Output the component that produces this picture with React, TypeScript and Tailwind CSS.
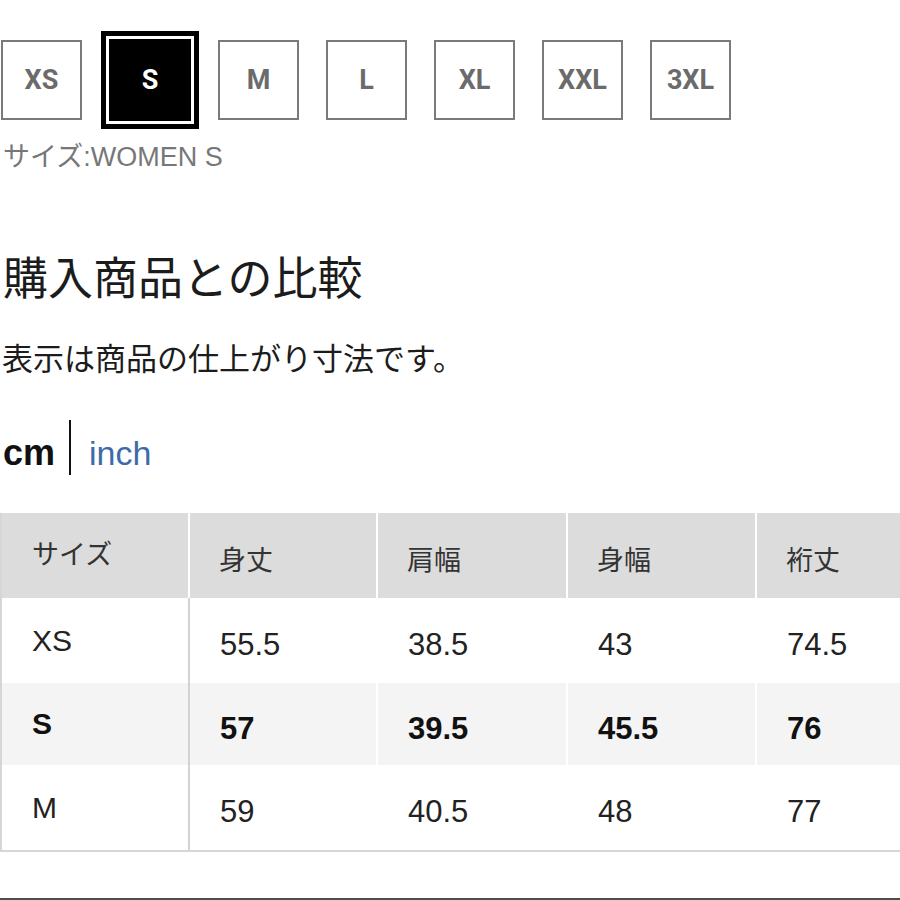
const sizes = ["XS", "S", "M", "L", "XL", "XXL", "3XL"];
const selectedSize = "S";

const headers = ["サイズ", "身丈", "肩幅", "身幅", "裄丈"];

const rows = [
    { size: "XS", values: ["55.5", "38.5", "43", "74.5"] },
    { size: "S", values: ["57", "39.5", "45.5", "76"] },
    { size: "M", values: ["59", "40.5", "48", "77"] },
];

function SizeButton({ label, selected }: { label: string; selected: boolean }) {
    return (
        <button
            type="button"
            className={
                selected
                    ? "flex h-[82px] w-[82px] items-center justify-center bg-black font-['Roboto',sans-serif] text-[27px] font-bold text-white outline-[5px] outline-offset-[3px] outline-black"
                    : "flex h-[80px] w-[81px] items-center justify-center border-2 border-[#7a7a7a] bg-white font-['Roboto',sans-serif] text-[27px] font-bold text-[#6b6b6b]"
            }
        >
            {label}
        </button>
    );
}

export default function App() {
    return (
        <div className="flex h-[900px] w-[900px] flex-col overflow-hidden bg-white font-['Liberation_Sans','Noto_Sans_CJK_JP',sans-serif] text-[#222]">
            <div className="flex items-center gap-[27px] pl-[1px] pt-[39px]">
                {sizes.map((s) => (
                    <SizeButton key={s} label={s} selected={s === selectedSize} />
                ))}
            </div>
            <p className="mt-[21px] pl-[3px] text-[27px] leading-[30px] text-[#777]">サイズ:WOMEN S</p>

            <h2 className="mt-[80px] pl-[3px] font-['Noto_Sans_CJK_JP',sans-serif] text-[45px] font-normal leading-[48px] text-[#1c1c1c]">
                購入商品との比較
            </h2>
            <p className="mt-[39px] pl-[2px] font-['Noto_Sans_CJK_JP',sans-serif] text-[31px] leading-[36px] text-[#1c1c1c]">
                表示は商品の仕上がり寸法です。
            </p>

            <div className="mt-[45px] flex h-[55px] items-center pl-[3px]">
                <span className="pt-[10px] text-[36px] font-bold leading-[36px] text-[#111]">cm</span>
                <span className="ml-[14px] h-[55px] w-[2px] bg-[#111]" />
                <span className="ml-[18px] pt-[11px] text-[34px] leading-[34px] text-[#3c6ca8]">inch</span>
            </div>

            <div className="mt-[38px] grid grid-cols-[188px_188px_190px_189px_1fr] grid-rows-[85px_85px_82px_85px] border-b-2 border-l-2 border-[#d6d6d6]">
                {headers.map((h, i) => (
                    <div
                        key={h}
                        className={`flex items-center bg-[#dcdcdc] text-[27px] leading-none text-[#333] ${
                            i === 0 ? "border-r-2 border-white pl-[30px]" : i < 4 ? "border-r-2 border-white pl-[29px] pt-[12px]" : "pl-[29px] pt-[12px]"
                        }`}
                    >
                        {h}
                    </div>
                ))}
                {rows.map((row) => {
                    const active = row.size === selectedSize;
                    const bg = active ? "bg-[#f4f4f4] font-bold text-[#111]" : "bg-white";
                    return [
                        <div
                            key={`${row.size}-size`}
                            className={`flex items-center border-r-2 border-[#d2d2d2] pl-[30px] text-[30px] leading-none ${bg}`}
                        >
                            {row.size}
                        </div>,
                        ...row.values.map((v, i) => (
                            <div
                                key={`${row.size}-${i}`}
                                className={`flex items-center pl-[30px] pt-[8px] text-[31px] leading-none ${bg} ${
                                    i < 3 ? "border-r-2 border-white" : ""
                                }`}
                            >
                                {v}
                            </div>
                        )),
                    ];
                })}
            </div>

            <div className="mt-auto h-[2px] w-full bg-[#4d4d4d]" />
        </div>
    );
}
